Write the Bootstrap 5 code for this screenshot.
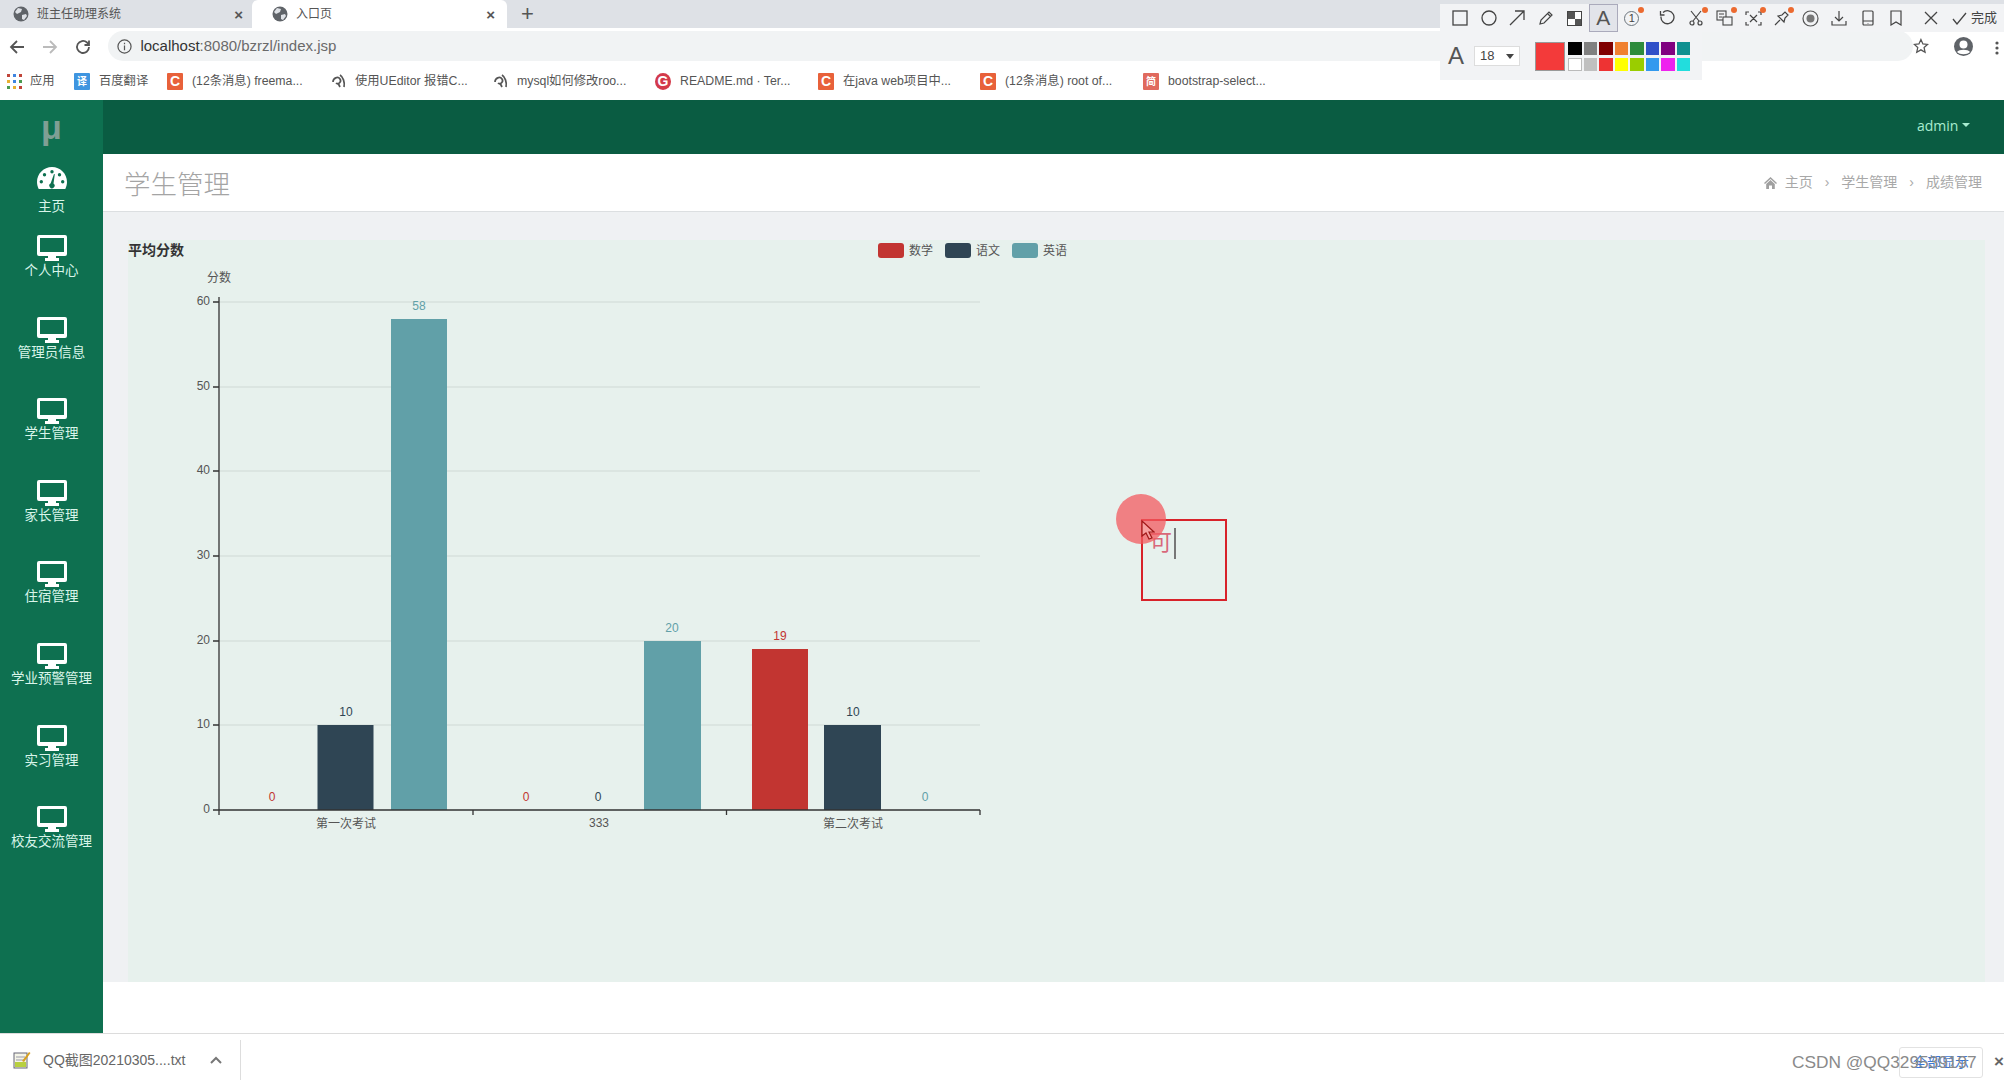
<!DOCTYPE html>
<html lang="zh-CN">
<head>
  <meta charset="UTF-8" />
  <title>入口页</title>
  <link href="https://cdn.jsdelivr.net/npm/bootstrap@5.3.3/dist/css/bootstrap.min.css" rel="stylesheet">
  <style>
    html, body { height: 100%; }
    body { height: 1080px; overflow: hidden; font-family: "Liberation Sans", "Noto Sans CJK SC", sans-serif; background: #fff; color: #555; position: relative; }

    /* browser chrome */
    .tab-strip { height: 28px; background: #dee1e6; }
    .br-tab { height: 28px; font-size: 12px; color: #555; }
    .br-tab-a { width: 252px; padding: 0 9px 0 13px; }
    .br-tab-b { width: 255px; padding: 0 12px 0 20px; background: #fff; border-radius: 6px 6px 0 0; }
    .br-tab .tab-x { font-size: 15px; margin-left: auto; color: #555; font-weight: 700; line-height: 1; }
    .br-plus { font-size: 22px; line-height: 1; margin-left: 14px; color: #555; }
    .addr-row { height: 34px; padding: 3px 0 1px 0; }
    .nav-ico { width: 33.5px; }
    .omni { width: 1825px; margin-left: 9px; height: 30px; background: #f1f3f4; border-radius: 15px; padding-left: 9px; font-size: 15px; color: #6a6a6a; }
    .omni b { font-weight: 400; color: #333; }
    .bm-row { height: 38px; font-size: 12.3px; color: #555; padding-left: 7px; }
    .bm-item { white-space: nowrap; }
    .bm-fav { width: 16px; height: 17px; margin-right: 9px; flex: none; font-size: 14px; font-weight: 700; line-height: 17px; text-align: center; color: #fff; background: #e8613a; border-radius: 1px; }
    .bm-blue { background: #3f95e0; font-size: 10px; }
    .bm-red { background: #e06a5e; font-size: 10px; }
    .bm-g { background: #d33a4a; border-radius: 50%; }

    /* screenshot tool */
    .shot-bar { position: absolute; left: 1440px; top: 4px; width: 564px; height: 28px; background: #f2f3f5; }
    .shot-bar2 { position: absolute; left: 1440px; top: 32px; width: 262px; height: 48px; background: #f2f3f5; padding-left: 8px; }
    .shot-cell { width: 28.6px; height: 28px; flex: none; position: relative; }
    .shot-cell.on { background: #e2e4ea; box-shadow: inset 0 0 0 1px #aab; }
    .shot-dot { position: absolute; top: 3px; right: 2px; width: 6px; height: 6px; border-radius: 50%; background: #ec6a30; }
    .shot-done { font-size: 13px; color: #444; white-space: nowrap; }
    .shot-a { font-size: 24px; color: #555; line-height: 1; width: 26px; }
    .shot-sel { width: 46px; height: 20px; background: #fff; border: 1px solid #ddd; font-size: 13px; color: #444; padding: 0 5px; }
    .shot-sel i { margin-left: auto; border: 4px solid transparent; border-top: 5px solid #444; border-bottom: 0; }
    .shot-cur { width: 30px; height: 29px; background: #f33a3a; border: 1px solid #999; margin-left: 15px; margin-right: 3px; }
    .swatches { display: grid; grid-template-columns: repeat(8, 13.5px); grid-auto-rows: 13px; gap: 3px 2px; }
    .swatches span { display: block; }

    /* app */
    .side-col { width: 103px; background: #0e7050; flex: none; }
    .side-logo { height: 54px; font-size: 34px; font-weight: 700; color: #7f9f94; line-height: 54px; text-align: center; }
    .side-item { height: 81.6px; color: #d9f5ea; font-size: 13.5px; }
    .side-item:hover { color: #fff; }
    .side-first { height: 81px; }
    .top-bar { height: 54px; background: #0a5c42; padding-right: 34px; }
    .top-bar .dropdown-toggle { color: #a8ecd0; font-size: 14px; margin-top: -4px; font-family: "Open Sans", sans-serif; }
    .title-bar { height: 58px; background: #fff; border-bottom: 1px solid #dcdfe1; padding: 0 22px 0 21px; }
    .title-bar h1 { font-size: 26.5px; font-weight: 300; color: #a4a4a4; margin: 0; font-family: "Noto Sans CJK SC", sans-serif; }
    .title-bar .breadcrumb { font-size: 14px; color: #a8a8a8; margin: 0; --bs-breadcrumb-divider: '›'; --bs-breadcrumb-item-padding-x: 12px; --bs-breadcrumb-divider-color: #aaa; --bs-breadcrumb-item-active-color: #a8a8a8; }
    .title-bar .breadcrumb a { color: #a8a8a8; text-decoration: none; }
    .board-wrap { height: 770px; background: #eff1f3; padding: 28px 19px 0 25px; }
    .board { background: #e7f1ed; height: 100%; }
    .board svg { display: block; }
    .chart-title { font: 700 14px "Noto Sans CJK SC", sans-serif; fill: #333; }
    .chart-txt { font: 12px "Noto Sans CJK SC", sans-serif; fill: #555; }
    .chart-num { font: 12px "Liberation Sans", sans-serif; fill: #555; text-anchor: middle; }
    .foot-gap { height: 51px; background: #fff; }

    /* overlay drawn in the recording */
    .mark-box { position: absolute; left: 1141px; top: 519px; width: 86px; height: 82px; border: 2px solid #d8222a; }
    .mark-txt { position: absolute; left: 7px; top: 4px; font: 22px/30px "Noto Sans CJK SC", sans-serif; color: #d8687a; }
    .mark-caret { position: absolute; left: 31px; top: 7px; width: 2px; height: 31px; background: #777; }
    .mark-dot { position: absolute; left: 1116px; top: 494px; width: 50px; height: 50px; border-radius: 50%; background: rgba(243, 90, 95, .75); }
    .mark-ptr { position: absolute; left: 1141px; top: 520px; }

    /* download bar */
    .dl-bar { height: 47px; border-top: 1px solid #dcdcdc; background: #fff; font-size: 14px; color: #666; }
    .dl-item { width: 241px; height: 40px; margin-top: 6px; padding-left: 13px; border-right: 1px solid #ddd; white-space: nowrap; }
    .dl-name { margin-left: 12px; }
    .dl-all { position: absolute; left: 1899px; top: 1047px; width: 84px; height: 31px; border: 1px solid #e2e2e2; border-radius: 3px; font-size: 14px; line-height: 29px; text-align: center; color: #3b78d8; }
    .dl-mark { position: absolute; left: 1792px; top: 1051px; font: 17.3px/22px "Liberation Sans", sans-serif; color: #8a8a8a; white-space: nowrap; }
    .dl-x { position: absolute; left: 1994px; top: 1052px; font-size: 17px; line-height: 20px; font-weight: 700; color: #666; }
  </style>
</head>
<body>
  <svg width="0" height="0" class="position-absolute">
    <symbol id="globe" viewBox="0 0 16 16"><circle cx="8" cy="8" r="7.5" fill="#5f6368"/><path d="M5 2l4 1-1 3-4 2-2-2zM9 9l4-1 1 2-3 4-2-1z" fill="#dee1e6"/></symbol>
    <symbol id="mon" viewBox="0 0 30 26"><path d="M2 0h26a2 2 0 0 1 2 2v17a2 2 0 0 1-2 2H19v2h3v3H8v-3h3v-2H2a2 2 0 0 1-2-2V2a2 2 0 0 1 2-2zM3 3v14h24V3z" fill="#fff"/></symbol>
    <symbol id="swirl" viewBox="0 0 16 16"><path d="M2 9c0-4 5-6 7-3s-2 6-4 4M9 2c3 2 5 7 4 12M9 14l-2-4" fill="none" stroke="#555" stroke-width="1.7"/></symbol>
  </svg>

  <div class="d-flex flex-column" style="height:1080px">
    <!-- tabs -->
    <div class="tab-strip d-flex align-items-center flex-none">
      <div class="br-tab br-tab-a d-flex align-items-center gap-2">
        <svg width="16" height="16"><use href="#globe"/></svg><span>班主任助理系统</span><span class="tab-x">×</span>
      </div>
      <div class="br-tab br-tab-b d-flex align-items-center gap-2">
        <svg width="16" height="16"><use href="#globe"/></svg><span>入口页</span><span class="tab-x">×</span>
      </div>
      <span class="br-plus">+</span>
    </div>

    <!-- address -->
    <div class="addr-row d-flex align-items-center">
      <div class="nav-ico text-center"><svg width="16" height="16" viewBox="0 0 16 16" fill="none" stroke="#555" stroke-width="1.8"><path d="M15 8H2M8 2L2 8l6 6"/></svg></div>
      <div class="nav-ico text-center"><svg width="16" height="16" viewBox="0 0 16 16" fill="none" stroke="#bbb" stroke-width="1.8"><path d="M1 8h13M8 2l6 6-6 6"/></svg></div>
      <div class="nav-ico text-center"><svg width="16" height="16" viewBox="0 0 16 16" fill="none" stroke="#555" stroke-width="1.8"><path d="M14 8a6 6 0 1 1-2-4.5L14 6M14 1.5V6H9.5"/></svg></div>
      <div class="omni d-flex align-items-center gap-2">
        <svg width="15" height="15" viewBox="0 0 16 16" fill="none" stroke="#555" stroke-width="1.3"><circle cx="8" cy="8" r="7"/><path d="M8 7v5M8 4v1.6"/></svg>
        <span><b>localhost</b>:8080/bzrzl/index.jsp</span>
      </div>
      <svg class="ms-auto" style="margin-right:75px" width="16" height="16" viewBox="0 0 16 16" fill="none" stroke="#555" stroke-width="1.3"><path d="M8 1.5l2 4.4 4.7.5-3.5 3.2 1 4.7L8 11.9l-4.2 2.4 1-4.7L1.300 6.400l4.700-.5z"/></svg>
    </div>

    <!-- bookmarks -->
    <div class="bm-row d-flex align-items-center">
      <div class="bm-item d-flex align-items-center" style="width:67px">
        <svg width="15" height="15" viewBox="0 0 15 15" class="me-2"><g fill="#c0453a"><rect width="3" height="3"/><rect x="6" width="3" height="3" fill="#3f85e0"/><rect x="12" width="3" height="3"/></g><g fill="#e8b030"><rect y="6" width="3" height="3"/><rect x="6" y="6" width="3" height="3" fill="#3f85e0"/><rect x="12" y="6" width="3" height="3" fill="#4a9a50"/></g><g fill="#4a9a50"><rect y="12" width="3" height="3"/><rect x="6" y="12" width="3" height="3" fill="#e8b030"/><rect x="12" y="12" width="3" height="3" fill="#c0453a"/></g></svg>应用
      </div>
      <div class="bm-item d-flex align-items-center" style="width:93px"><span class="bm-fav bm-blue">译</span>百度翻译</div>
      <div class="bm-item d-flex align-items-center" style="width:164px"><span class="bm-fav">C</span>(12条消息) freema...</div>
      <div class="bm-item d-flex align-items-center" style="width:162px"><svg width="16" height="16" style="margin-right:8px"><use href="#swirl"/></svg>使用UEditor 报错C...</div>
      <div class="bm-item d-flex align-items-center" style="width:162px"><svg width="16" height="16" style="margin-right:8px"><use href="#swirl"/></svg>mysql如何修改roo...</div>
      <div class="bm-item d-flex align-items-center" style="width:163px"><span class="bm-fav bm-g">G</span>README.md · Ter...</div>
      <div class="bm-item d-flex align-items-center" style="width:162px"><span class="bm-fav">C</span>在java web项目中...</div>
      <div class="bm-item d-flex align-items-center" style="width:163px"><span class="bm-fav">C</span>(12条消息) root of...</div>
      <div class="bm-item d-flex align-items-center"><span class="bm-fav bm-red">简</span>bootstrap-select...</div>
    </div>

    <!-- app -->
    <div class="d-flex" style="height:933px">
      <div class="side-col d-flex flex-column">
        <div class="side-logo">μ</div>
        <nav class="nav flex-column">
          <a class="side-item side-first d-flex flex-column align-items-center text-decoration-none" href="#" style="padding-top:13px">
            <svg width="30" height="22" viewBox="0 0 30 22"><path fill="#fff" fill-rule="evenodd" d="M15 0C6.700 0 0 6.700 0 15c0 2.500.6 4.800 1.700 7h26.600c1.100-2.200 1.700-4.500 1.700-7C30 6.700 23.300 0 15 0zM15 3a1.700 1.700 0 1 1 0 3.400A1.700 1.700 0 0 1 15 3zM7.500 6a1.700 1.700 0 1 1 0 3.400 1.700 1.700 0 0 1 0-3.400zM22.500 6a1.700 1.700 0 1 1 0 3.400 1.700 1.700 0 0 1 0-3.400zM4.300 13a1.700 1.700 0 1 1 0 3.400 1.700 1.700 0 0 1 0-3.400zM25.700 13a1.700 1.700 0 1 1 0 3.400 1.700 1.700 0 0 1 0-3.400zM17 7l.8.2-1.300 9.300a2.600 2.600 0 1 1-2.800-.2z"/></svg>
            <span class="mt-2">主页</span>
          </a>
          <a class="side-item d-flex flex-column align-items-center text-decoration-none" href="#"><svg width="30" height="26"><use href="#mon"/></svg><span class="lbl">个人中心</span></a>
          <a class="side-item d-flex flex-column align-items-center text-decoration-none" href="#"><svg width="30" height="26"><use href="#mon"/></svg><span class="lbl">管理员信息</span></a>
          <a class="side-item d-flex flex-column align-items-center text-decoration-none" href="#"><svg width="30" height="26"><use href="#mon"/></svg><span class="lbl">学生管理</span></a>
          <a class="side-item d-flex flex-column align-items-center text-decoration-none" href="#"><svg width="30" height="26"><use href="#mon"/></svg><span class="lbl">家长管理</span></a>
          <a class="side-item d-flex flex-column align-items-center text-decoration-none" href="#"><svg width="30" height="26"><use href="#mon"/></svg><span class="lbl">住宿管理</span></a>
          <a class="side-item d-flex flex-column align-items-center text-decoration-none" href="#"><svg width="30" height="26"><use href="#mon"/></svg><span class="lbl">学业预警管理</span></a>
          <a class="side-item d-flex flex-column align-items-center text-decoration-none" href="#"><svg width="30" height="26"><use href="#mon"/></svg><span class="lbl">实习管理</span></a>
          <a class="side-item d-flex flex-column align-items-center text-decoration-none" href="#"><svg width="30" height="26"><use href="#mon"/></svg><span class="lbl">校友交流管理</span></a>
        </nav>
      </div>

      <div class="flex-grow-1 d-flex flex-column">
        <div class="top-bar d-flex align-items-center justify-content-end">
          <a class="dropdown-toggle text-decoration-none" href="#" data-bs-toggle="dropdown">admin</a>
        </div>
        <div class="title-bar d-flex align-items-center justify-content-between">
          <h1>学生管理</h1>
          <ol class="breadcrumb">
            <li class="breadcrumb-item d-flex align-items-center"><svg width="13" height="12" viewBox="0 0 13 12" class="me-2"><path fill="#a0a0a0" d="M6.500 0l6.500 6-1 1-5.500-5-5.500 5-1-1zM2.200 7l4.300-3.900L10.800 7v5H8V8.500H5V12H2.200z"/></svg><a href="#">主页</a></li>
            <li class="breadcrumb-item"><a href="#">学生管理</a></li>
            <li class="breadcrumb-item active">成绩管理</li>
          </ol>
        </div>
        <div class="board-wrap">
          <div class="board">
            <!-- svg origin = page (128,240) -->
            <svg width="1857" height="740" viewBox="128 240 1857 740">
              <text class="chart-title" x="128" y="255">平均分数</text>

              <rect x="878" y="243" width="26" height="15" rx="3" fill="#c23531"/><text class="chart-txt" x="909" y="255">数学</text>
              <rect x="945" y="243" width="26" height="15" rx="3" fill="#2f4554"/><text class="chart-txt" x="976" y="255">语文</text>
              <rect x="1012" y="243" width="26" height="15" rx="3" fill="#61a0a8"/><text class="chart-txt" x="1043" y="255">英语</text>

              <text class="chart-txt" x="207" y="282">分数</text>

              <g stroke="#cfd9d5" stroke-width="1">
                <path d="M219 302H980M219 387H980M219 471H980M219 556H980M219 641H980M219 725H980"/>
              </g>
              <g fill="#61a0a8">
                <rect x="391" y="319" width="56" height="491"/>
                <rect x="644" y="641" width="57" height="169"/>
              </g>
              <g fill="#2f4554">
                <rect x="317.500" y="725" width="56" height="85"/>
                <rect x="824" y="725" width="57" height="85"/>
              </g>
              <rect x="752" y="649" width="56" height="161" fill="#c23531"/>

              <path d="M219 297V811M213 302H219M213 387H219M213 471H219M213 556H219M213 641H219M213 725H219M213 810H980M219 810V815M473 810V815M726.500 810V815M980 810V815" stroke="#333" stroke-width="1.300" fill="none"/>

              <g class="y-lbls">
                <text class="chart-num" style="text-anchor:end" x="210" y="305">60</text>
                <text class="chart-num" style="text-anchor:end" x="210" y="390">50</text>
                <text class="chart-num" style="text-anchor:end" x="210" y="474">40</text>
                <text class="chart-num" style="text-anchor:end" x="210" y="559">30</text>
                <text class="chart-num" style="text-anchor:end" x="210" y="644">20</text>
                <text class="chart-num" style="text-anchor:end" x="210" y="728">10</text>
                <text class="chart-num" style="text-anchor:end" x="210" y="813">0</text>
              </g>

              <text class="chart-txt" text-anchor="middle" x="346" y="828">第一次考试</text>
              <text class="chart-num" x="599" y="827">333</text>
              <text class="chart-txt" text-anchor="middle" x="853" y="828">第二次考试</text>

              <text class="chart-num" style="fill:#61a0a8" x="419" y="310">58</text>
              <text class="chart-num" style="fill:#61a0a8" x="672" y="632">20</text>
              <text class="chart-num" style="fill:#c23531" x="780" y="640">19</text>
              <text class="chart-num" style="fill:#2f4554" x="346" y="716">10</text>
              <text class="chart-num" style="fill:#2f4554" x="853" y="716">10</text>
              <text class="chart-num" style="fill:#c23531" x="272" y="801">0</text>
              <text class="chart-num" style="fill:#c23531" x="526" y="801">0</text>
              <text class="chart-num" style="fill:#2f4554" x="598" y="801">0</text>
              <text class="chart-num" style="fill:#61a0a8" x="925" y="801">0</text>
            </svg>
          </div>
        </div>
        <div class="foot-gap"></div>
      </div>
    </div>

    <!-- download bar -->
    <div class="dl-bar d-flex">
      <div class="dl-item d-flex align-items-center">
        <svg width="18" height="18" viewBox="0 0 18 18"><rect x="1" y="2" width="13" height="15" fill="#f5f5e8" stroke="#667"/><path d="M3 6h9M3 9h9" stroke="#99a"/><rect x="2" y="11" width="11" height="5" fill="#b8d040"/><path d="M9 10l7-9 1.500 1L11 11z" fill="#d8a020"/></svg>
        <span class="dl-name">QQ截图20210305....txt</span>
        <svg class="ms-auto" style="margin-right:18px" width="12" height="8" viewBox="0 0 12 8" fill="none" stroke="#777" stroke-width="2"><path d="M1 7l5-5 5 5"/></svg>
      </div>
    </div>
  </div>

  <!-- screenshot tool toolbar, floats over the browser -->
  <div class="shot-bar d-flex align-items-center" style="padding-left:6px">
    <div class="shot-cell d-flex align-items-center justify-content-center"><svg width="16" height="16" fill="none" stroke="#444" stroke-width="1.300"><rect x="1" y="1" width="14" height="14"/></svg></div>
    <div class="shot-cell d-flex align-items-center justify-content-center"><svg width="16" height="16" fill="none" stroke="#444" stroke-width="1.300"><circle cx="8" cy="8" r="7"/></svg></div>
    <div class="shot-cell d-flex align-items-center justify-content-center"><svg width="16" height="16" fill="none" stroke="#444" stroke-width="1.300"><path d="M1 15L15 1M6 1h9v9"/></svg></div>
    <div class="shot-cell d-flex align-items-center justify-content-center"><svg width="16" height="16" fill="none" stroke="#444" stroke-width="1.200"><path d="M2 14l1-4 8-8 3 3-8 8zM9.500 3.500l3 3"/></svg></div>
    <div class="shot-cell d-flex align-items-center justify-content-center"><svg width="15" height="15"><rect x=".5" y=".5" width="14" height="14" fill="#fff" stroke="#444"/><rect x="1" y="1" width="7" height="7" fill="#555"/><rect x="8" y="8" width="6" height="6" fill="#555"/></svg></div>
    <div class="shot-cell on d-flex align-items-center justify-content-center" style="font-size:21px;color:#555">A</div>
    <div class="shot-cell d-flex align-items-center justify-content-center" style="font-size:11px;color:#444"><span class="border border-secondary rounded-circle d-block text-center" style="width:15px;height:15px;line-height:13px">1</span><i class="shot-dot"></i></div>
    <div class="shot-cell d-flex align-items-center justify-content-center" style="margin-left:7px"><svg width="16" height="16" fill="none" stroke="#444" stroke-width="1.300"><path d="M4 2.500a6.500 6.500 0 1 1-2 4M1.500 1v4h4"/></svg></div>
    <div class="shot-cell d-flex align-items-center justify-content-center"><svg width="16" height="16" fill="none" stroke="#444" stroke-width="1.200"><circle cx="4" cy="13" r="2"/><circle cx="12" cy="13" r="2"/><path d="M5 11L13 1M11 11L3 1M0 0"/></svg><i class="shot-dot"></i></div>
    <div class="shot-cell d-flex align-items-center justify-content-center"><svg width="17" height="16" fill="none" stroke="#444" stroke-width="1.100"><rect x="1" y="1" width="9" height="9"/><rect x="7" y="7" width="9" height="8" fill="#f2f3f5"/><path d="M3 4h5M3 7h3"/></svg><i class="shot-dot"></i></div>
    <div class="shot-cell d-flex align-items-center justify-content-center"><svg width="17" height="15" fill="none" stroke="#444" stroke-width="1.200"><path d="M1 4V1h3M16 4V1h-3M1 11v3h3M16 11v3h-3M5 4l7 7M12 4l-7 7"/></svg><i class="shot-dot"></i></div>
    <div class="shot-cell d-flex align-items-center justify-content-center"><svg width="16" height="16" fill="none" stroke="#444" stroke-width="1.200"><path d="M1 15l5-5M4 6l6 6 1-4 3-3-3-3-3 3z"/></svg><i class="shot-dot"></i></div>
    <div class="shot-cell d-flex align-items-center justify-content-center"><svg width="17" height="17" fill="none" stroke="#555" stroke-width="1.200"><circle cx="8.500" cy="8.500" r="7.500"/><circle cx="8.500" cy="8.500" r="4" fill="#777" stroke="none"/></svg></div>
    <div class="shot-cell d-flex align-items-center justify-content-center"><svg width="16" height="16" fill="none" stroke="#444" stroke-width="1.200"><path d="M8 1v10M4 7l4 4 4-4M1 11v4h14v-4"/></svg></div>
    <div class="shot-cell d-flex align-items-center justify-content-center"><svg width="12" height="16" fill="none" stroke="#444" stroke-width="1.200"><rect x="1" y="1" width="10" height="14" rx="1"/><path d="M1 11h10M6 13v.5"/></svg></div>
    <div class="shot-cell d-flex align-items-center justify-content-center"><svg width="12" height="16" fill="none" stroke="#444" stroke-width="1.200"><path d="M1 1h10v14l-5-3-5 3z"/></svg></div>
    <div class="shot-cell d-flex align-items-center justify-content-center" style="margin-left:6px"><svg width="14" height="14" fill="none" stroke="#444" stroke-width="1.300"><path d="M1 1l12 12M13 1L1 13"/></svg></div>
    <div class="shot-done d-flex align-items-center gap-1" style="margin-left:7px"><svg width="15" height="13" fill="none" stroke="#444" stroke-width="1.300"><path d="M1 7l4 5L14 1"/></svg>完成</div>
  </div>
  <div class="shot-bar2 d-flex align-items-center">
    <span class="shot-a">A</span>
    <div class="shot-sel d-flex align-items-center">18<i></i></div>
    <div class="shot-cur"></div>
    <div class="swatches">
      <span style="background:#000"></span><span style="background:#808080"></span><span style="background:#800000"></span><span style="background:#f08030"></span><span style="background:#2e8b3c"></span><span style="background:#3050c8"></span><span style="background:#800080"></span><span style="background:#109090"></span>
      <span style="background:#fff;border:1px solid #bbb"></span><span style="background:#c0c0c0"></span><span style="background:#ee3333"></span><span style="background:#ffff00"></span><span style="background:#9acd00"></span><span style="background:#3399ee"></span><span style="background:#ee22ee"></span><span style="background:#22dddd"></span>
    </div>
  </div>
  <svg class="position-absolute" style="left:1954px;top:37px" width="19" height="19" viewBox="0 0 19 19"><circle cx="9.500" cy="9.500" r="9.500" fill="#5f6368"/><circle cx="9.500" cy="7.500" r="4" fill="#fff"/><path d="M3 15c2-3 11-3 13 0-3 3-10 3-13 0z" fill="#fff"/></svg>
  <svg class="position-absolute" style="left:1995px;top:41px" width="4" height="14"><circle cx="2" cy="2" r="1.600" fill="#555"/><circle cx="2" cy="7" r="1.600" fill="#555"/><circle cx="2" cy="12" r="1.600" fill="#555"/></svg>

  <!-- annotation being drawn in the recording -->
  <div class="mark-box"><span class="mark-txt">可</span><span class="mark-caret"></span></div>
  <div class="mark-dot"></div>
  <svg class="mark-ptr" width="14" height="22" viewBox="0 0 14 22"><path d="M1 1v15l4-3 3 6 3-1-3-6h5z" fill="#f7a0a0" stroke="#a01818" stroke-width="1.200"/></svg>

  <!-- watermark and download buttons -->
  <span class="dl-all">全部显示</span>
  <span class="dl-mark">CSDN @QQ329539197</span>
  <span class="dl-x">×</span>

  <script src="https://cdn.jsdelivr.net/npm/bootstrap@5.3.3/dist/js/bootstrap.bundle.min.js"></script>
</body>
</html>
